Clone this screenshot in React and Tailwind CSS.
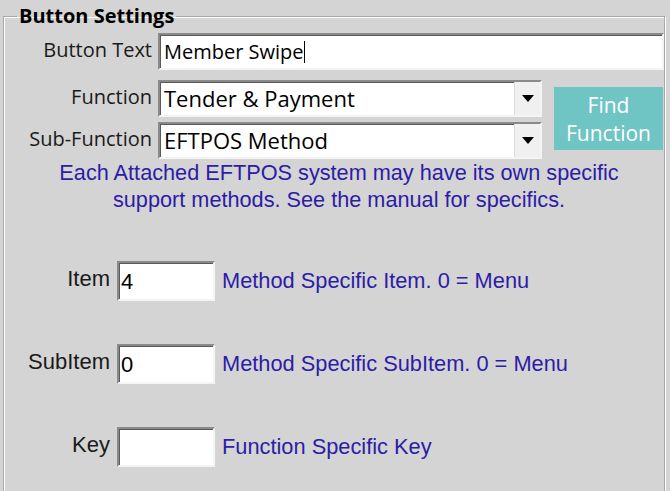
import React from "react";

const sunken =
  "bg-white border-2 border-t-[#8a8a8a] border-l-[#8a8a8a] border-b-[#f4f4f4] border-r-[#f4f4f4] shadow-[inset_1px_1px_0_#5a5a5a]";

const Select = ({ value }) => {
  return (
    <div className={`${sunken} h-[37px] w-[384px] flex items-center`}>
      <span className="flex-1 pl-[4px] text-[22px] text-black">{value}</span>
      <div className="h-full w-[26px] bg-[#f0f0f0] border-l border-[#dcdcdc] flex items-center justify-center">
        <svg width="12" height="7" viewBox="0 0 12 7">
          <path d="M0 0 L12 0 L6 7 Z" fill="#000" />
        </svg>
      </div>
    </div>
  );
};

const ItemRow = ({ label, value, help }) => {
  return (
    <div className="flex items-center h-[40px] font-[family-name:'Liberation_Sans',Arial,sans-serif]">
      <span className="w-[106px] text-right text-[22px] text-[#1a1a1a] -mt-[5px]">{label}</span>
      <div className={`${sunken} ml-[7px] h-[40px] w-[98px] flex items-center pl-[2px] text-[22px] text-black`}>
        {value}
      </div>
      <span className="ml-[7px] text-[21.8px] text-[#2c1ca6]">{help}</span>
    </div>
  );
};

const App = () => {
  return (
    <div className="w-[670px] h-[491px] overflow-hidden bg-[#d4d4d4] font-[family-name:'Open_Sans',sans-serif]">
      <fieldset className="ml-[3px] mt-[3px] w-[662px] h-[520px] border border-[#a8a8a8] shadow-[inset_1px_1px_0_#ffffff,1px_1px_0_#ffffff] px-0">
        <legend className="ml-[13px] px-[2px] font-bold text-[20px] leading-[26px] text-black">
          Button Settings
        </legend>

        {/* top part: text + function pickers */}
        <div className="text-[#1a1a1a] text-[20px]">
          <div className="flex items-center mt-[4px]">
            <span className="w-[148px] text-right -mt-[4px]">Button Text</span>
            <div className={`${sunken} ml-[6px] h-[37px] w-[506px] flex items-center pl-[4px] text-[20px] text-black`}>
              Member Swipe
              <span className="w-[1px] h-[22px] bg-black" />
            </div>
          </div>

          <div className="flex mt-[10px]">
            <div className="flex flex-col gap-[5px]">
              <div className="flex items-center">
                <span className="w-[148px] text-right -mt-[4px]">Function</span>
                <div className="ml-[6px]">
                  <Select value="Tender & Payment" />
                </div>
              </div>
              <div className="flex items-center">
                <span className="w-[148px] text-right -mt-[4px]">Sub-Function</span>
                <div className="ml-[6px]">
                  <Select value="EFTPOS Method" />
                </div>
              </div>
            </div>
            <div className="ml-[12px] mt-[7px] h-[63px] w-[109px] bg-[#6fc4c4] flex flex-col items-center justify-center text-white text-[21px] leading-[28px]">
              <span>Find</span>
              <span>Function</span>
            </div>
          </div>
        </div>

        <div className="ml-[10px] mt-0 text-center text-[21.7px] leading-[27px] text-[#2c1ca6] font-[family-name:'Liberation_Sans',Arial,sans-serif]">
          <p>Each Attached EFTPOS system may have its own specific</p>
          <p>support methods. See the manual for specifics.</p>
        </div>

        <div className="mt-[48px] flex flex-col gap-[43px]">
          <ItemRow label="Item" value="4" help="Method Specific Item. 0 = Menu" />
          <ItemRow label="SubItem" value="0" help="Method Specific SubItem. 0 = Menu" />
          <ItemRow label="Key" value="" help="Function Specific Key" />
        </div>
      </fieldset>
    </div>
  );
};

export default App;
